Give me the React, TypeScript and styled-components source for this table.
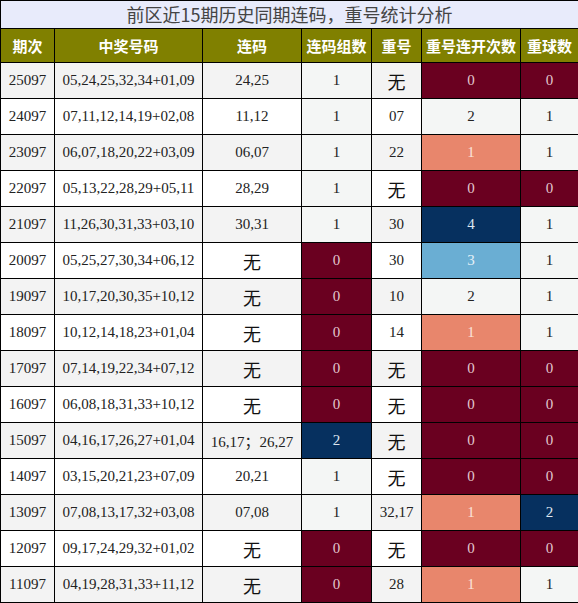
import React from 'react';
import styled, { createGlobalStyle } from 'styled-components';

type Tone = 'maroon' | 'salmon' | 'navy' | 'sky';

type Row = {
  issue: string;
  numbers: string;
  pair: string;
  pairCount: [string, Tone?];
  repeat: string;
  repeatRun: [string, Tone?];
  blue: [string, Tone?];
};

const GlobalStyle = createGlobalStyle`
  body {
    margin: 0;
    background: #fff;
  }
`;

const tones: Record<Tone, { bg: string; fg: string }> = {
  maroon: { bg: '#6a0020', fg: '#e3c9cf' },
  salmon: { bg: '#e8866c', fg: '#fbe3da' },
  navy: { bg: '#06305f', fg: '#dfe6ef' },
  sky: { bg: '#6aaed3', fg: '#e6f1f8' },
};

const rows: Row[] = [
  { issue: '25097', numbers: '05,24,25,32,34+01,09', pair: '24,25', pairCount: ['1'], repeat: '无', repeatRun: ['0', 'maroon'], blue: ['0', 'maroon'] },
  { issue: '24097', numbers: '07,11,12,14,19+02,08', pair: '11,12', pairCount: ['1'], repeat: '07', repeatRun: ['2'], blue: ['1'] },
  { issue: '23097', numbers: '06,07,18,20,22+03,09', pair: '06,07', pairCount: ['1'], repeat: '22', repeatRun: ['1', 'salmon'], blue: ['1'] },
  { issue: '22097', numbers: '05,13,22,28,29+05,11', pair: '28,29', pairCount: ['1'], repeat: '无', repeatRun: ['0', 'maroon'], blue: ['0', 'maroon'] },
  { issue: '21097', numbers: '11,26,30,31,33+03,10', pair: '30,31', pairCount: ['1'], repeat: '30', repeatRun: ['4', 'navy'], blue: ['1'] },
  { issue: '20097', numbers: '05,25,27,30,34+06,12', pair: '无', pairCount: ['0', 'maroon'], repeat: '30', repeatRun: ['3', 'sky'], blue: ['1'] },
  { issue: '19097', numbers: '10,17,20,30,35+10,12', pair: '无', pairCount: ['0', 'maroon'], repeat: '10', repeatRun: ['2'], blue: ['1'] },
  { issue: '18097', numbers: '10,12,14,18,23+01,04', pair: '无', pairCount: ['0', 'maroon'], repeat: '14', repeatRun: ['1', 'salmon'], blue: ['1'] },
  { issue: '17097', numbers: '07,14,19,22,34+07,12', pair: '无', pairCount: ['0', 'maroon'], repeat: '无', repeatRun: ['0', 'maroon'], blue: ['0', 'maroon'] },
  { issue: '16097', numbers: '06,08,18,31,33+10,12', pair: '无', pairCount: ['0', 'maroon'], repeat: '无', repeatRun: ['0', 'maroon'], blue: ['0', 'maroon'] },
  { issue: '15097', numbers: '04,16,17,26,27+01,04', pair: '16,17；26,27', pairCount: ['2', 'navy'], repeat: '无', repeatRun: ['0', 'maroon'], blue: ['0', 'maroon'] },
  { issue: '14097', numbers: '03,15,20,21,23+07,09', pair: '20,21', pairCount: ['1'], repeat: '无', repeatRun: ['0', 'maroon'], blue: ['0', 'maroon'] },
  { issue: '13097', numbers: '07,08,13,17,32+03,08', pair: '07,08', pairCount: ['1'], repeat: '32,17', repeatRun: ['1', 'salmon'], blue: ['2', 'navy'] },
  { issue: '12097', numbers: '09,17,24,29,32+01,02', pair: '无', pairCount: ['0', 'maroon'], repeat: '无', repeatRun: ['0', 'maroon'], blue: ['0', 'maroon'] },
  { issue: '11097', numbers: '04,19,28,31,33+11,12', pair: '无', pairCount: ['0', 'maroon'], repeat: '28', repeatRun: ['1', 'salmon'], blue: ['1'] },
];

const headers = ['期次', '中奖号码', '连码', '连码组数', '重号', '重号连开次数', '重球数'];
const widths = [54, 148, 99, 70, 50, 99, 58];

const Table = styled.table`
  width: 578px;
  table-layout: fixed;
  border-collapse: collapse;
  font-family: 'Liberation Serif', 'Noto Sans CJK SC', serif;
`;

const Title = styled.th`
  height: 27px;
  padding: 0;
  background: #e8ebfb;
  border: 1px solid #000;
  color: #444;
  font-family: 'Noto Sans CJK SC', sans-serif;
  font-size: 18px;
  font-weight: 400;
  line-height: 27px;
`;

const HeadCell = styled.th`
  height: 33px;
  padding: 0;
  background: #808000;
  border: 1px solid #000;
  color: #fff;
  font-family: 'Noto Sans CJK SC', sans-serif;
  font-size: 15px;
  font-weight: 700;
  white-space: nowrap;
`;

const BodyRow = styled.tr`
  height: 36px;
`;

const Cell = styled.td<{ $tone?: Tone; $bg: string }>`
  padding: 0;
  border: 1px solid #000;
  text-align: center;
  white-space: nowrap;
  font-size: 15px;
  color: ${(p) => (p.$tone ? tones[p.$tone].fg : '#222')};
  background: ${(p) => (p.$tone ? tones[p.$tone].bg : p.$bg)};
`;

const None = styled.span`
  font-family: 'Noto Sans CJK SC', sans-serif;
  font-size: 18px;
  color: #111;
`;

const Separator = styled.span`
  font-family: 'Noto Sans CJK SC', sans-serif;
`;

function Text({ value }: { value: string }) {
  if (value === '无') return <None>无</None>;
  if (value.includes('；')) {
    const [a, b] = value.split('；');
    return (
      <>
        {a}
        <Separator>；</Separator>
        {b}
      </>
    );
  }
  return <>{value}</>;
}

export default function App() {
  return (
    <>
      <GlobalStyle />
      <Table>
        <colgroup>
          {widths.map((w, i) => (
            <col key={i} style={{ width: w }} />
          ))}
        </colgroup>
        <thead>
          <tr>
            <Title colSpan={7}>前区近15期历史同期连码，重号统计分析</Title>
          </tr>
          <tr>
            {headers.map((h) => (
              <HeadCell key={h}>{h}</HeadCell>
            ))}
          </tr>
        </thead>
        <tbody>
          {rows.map((r, i) => {
            const stripe = i % 2 === 0 ? '#f3f3f3' : '#ffffff';
            const fixed = '#f4f6f5';
            return (
              <BodyRow key={r.issue}>
                <Cell $bg={stripe}>{r.issue}</Cell>
                <Cell $bg={stripe}>{r.numbers}</Cell>
                <Cell $bg={stripe}>
                  <Text value={r.pair} />
                </Cell>
                <Cell $bg={fixed} $tone={r.pairCount[1]}>
                  {r.pairCount[0]}
                </Cell>
                <Cell $bg={stripe}>
                  <Text value={r.repeat} />
                </Cell>
                <Cell $bg={fixed} $tone={r.repeatRun[1]}>
                  {r.repeatRun[0]}
                </Cell>
                <Cell $bg={fixed} $tone={r.blue[1]}>
                  {r.blue[0]}
                </Cell>
              </BodyRow>
            );
          })}
        </tbody>
      </Table>
    </>
  );
}
